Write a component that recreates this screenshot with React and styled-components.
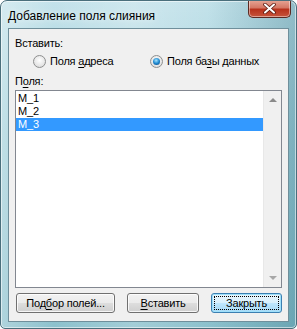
import React, { useState } from 'react'
import styled, { createGlobalStyle } from 'styled-components'

const GlobalStyle = createGlobalStyle`
  html, body {
    margin: 0;
    padding: 0;
    background: #ffffff;
  }
  body {
    font-family: "Liberation Sans", Arial, sans-serif;
    font-size: 11px;
    color: #000;
  }
`

const Window = styled.div`
  width: 297px;
  height: 329px;
  box-sizing: border-box;
  border: 1px solid #4a6f7c;
  border-radius: 7px 7px 5px 5px;
  background:
    linear-gradient(90deg, rgba(255,255,255,0.3) 0%, rgba(255,255,255,0) 18%, rgba(255,255,255,0.2) 45%, rgba(255,255,255,0) 70%, rgba(30,100,120,0.3) 100%),
    linear-gradient(180deg, #c3e2ea 0%, #a6d2dc 40%, #8cc1cd 100%);
  box-shadow: inset 0 0 0 1px rgba(255,255,255,0.55);
  display: flex;
  flex-direction: column;
  padding: 0 7px 6px 7px;
  overflow: hidden;
`

const TitleBar = styled.div`
  height: 27px;
  display: flex;
  align-items: flex-start;
  justify-content: space-between;
`

const Title = styled.span`
  margin-top: 8px;
  font-size: 12px;
  color: #000;
  text-shadow: 0 0 6px rgba(255,255,255,0.9);
`

const CloseButton = styled.div`
  width: 43px;
  height: 18px;
  margin-right: -2px;
  margin-top: -1px;
  box-sizing: border-box;
  border: 1px solid #5b2a23;
  border-top: none;
  border-radius: 0 0 5px 5px;
  background: linear-gradient(180deg, #e8a797 0%, #d57865 45%, #b8321c 55%, #c6553c 100%);
  box-shadow: inset 0 0 0 1px rgba(255,255,255,0.45);
  display: flex;
  align-items: center;
  justify-content: center;
`

const Client = styled.div`
  flex: 1;
  border: 1px solid #6f8f9b;
  background: #f0f0f0;
  display: flex;
  flex-direction: column;
  padding: 7px 6px 0 6px;
  letter-spacing: -0.2px;
`

const GroupLabel = styled.div`
  height: 14px;
  line-height: 14px;
`

const RadioRow = styled.div`
  display: flex;
  align-items: center;
  height: 16px;
  margin-top: 3px;
  padding-left: 18px;
`

const RadioOption = styled.label`
  display: flex;
  align-items: center;
  gap: 4px;
  width: ${p => p.$width}px;
  cursor: default;
`

const RadioCircle = styled.span`
  width: 13px;
  height: 13px;
  box-sizing: border-box;
  border-radius: 50%;
  border: 1px solid #8e8f8f;
  background: radial-gradient(circle at 50% 40%, #ffffff 0%, #e2e2e2 70%, #cfcfcf 100%);
  display: flex;
  align-items: center;
  justify-content: center;
  &::after {
    content: '';
    display: ${p => (p.$checked ? 'block' : 'none')};
    width: 7px;
    height: 7px;
    border-radius: 50%;
    background: radial-gradient(circle at 45% 35%, #a6e4ff 0%, #1f8ad1 50%, #0f3f75 100%);
  }
`

const FieldsLabel = styled.div`
  height: 14px;
  line-height: 14px;
  margin-top: 5px;
`

const Key = styled.span`
  text-decoration: underline;
  text-underline-offset: 2px;
`

const ListBox = styled.div`
  margin-top: 2px;
  height: 198px;
  box-sizing: border-box;
  border: 1px solid #828790;
  background: #fff;
  display: flex;
`

const Items = styled.div`
  flex: 1;
  padding-top: 1px;
`

const Item = styled.div`
  height: 13px;
  line-height: 13px;
  padding-left: 2px;
  background: ${p => (p.$selected ? '#3399ff' : 'transparent')};
  color: ${p => (p.$selected ? '#fff' : '#000')};
`

const ScrollBar = styled.div`
  width: 17px;
  background: #f0f0f0;
  border-left: 1px solid #e8e8e8;
  display: flex;
  flex-direction: column;
  justify-content: space-between;
  align-items: center;
  padding: 7px 0 7px;
`

const Arrow = styled.span`
  width: 0;
  height: 0;
  border-left: 4px solid transparent;
  border-right: 4px solid transparent;
  ${p => (p.$down ? 'border-top: 4px solid #a7a7a7;' : 'border-bottom: 4px solid #8a8a8a;')}
`

const ButtonRow = styled.div`
  display: flex;
  align-items: center;
  margin-top: 5px;
  padding-left: 1px;
  gap: 12px;
`

const Button = styled.button`
  width: ${p => p.$width}px;
  height: 20px;
  box-sizing: border-box;
  padding: 0;
  font-family: "Liberation Sans", Arial, sans-serif;
  font-size: 11px;
  letter-spacing: -0.2px;
  color: #000;
  border-radius: 3px;
  border: 1px solid ${p => (p.$default ? '#3c7fb1' : '#707070')};
  background: ${p =>
    p.$default
      ? 'linear-gradient(180deg, #eaf6fd 0%, #d9f0fc 48%, #bee6fd 52%, #a7d9f5 100%)'
      : 'linear-gradient(180deg, #f2f2f2 0%, #ebebeb 48%, #dddddd 52%, #cfcfcf 100%)'};
  box-shadow: inset 0 0 0 1px ${p => (p.$default ? '#9fe0fb' : 'rgba(255,255,255,0.8)')};
  position: relative;
  &::after {
    content: '';
    display: ${p => (p.$default ? 'block' : 'none')};
    position: absolute;
    inset: 2px;
    border: 1px dotted #000;
  }
`

const fields = ['M_1', 'M_2', 'M_3']

export default function App() {
  const [mode, setMode] = useState('db')
  const [selected, setSelected] = useState(2)

  return (
    <>
      <GlobalStyle />
      <Window>
        <TitleBar>
          <Title>Добавление поля слияния</Title>
          <CloseButton>
            <svg width="13" height="11" viewBox="0 0 13 11">
              <path d="M2 1.5 L11 9.5 M11 1.5 L2 9.5" stroke="#5a1a10" strokeWidth="3.6" strokeLinecap="round" />
              <path d="M2 1.5 L11 9.5 M11 1.5 L2 9.5" stroke="#ffffff" strokeWidth="2" strokeLinecap="round" />
            </svg>
          </CloseButton>
        </TitleBar>
        <Client>
          <GroupLabel>Вставить:</GroupLabel>
          <RadioRow>
            <RadioOption $width={117} onClick={() => setMode('addr')}>
              <RadioCircle $checked={mode === 'addr'} />
              <span>Поля <Key>а</Key>дреса</span>
            </RadioOption>
            <RadioOption $width={130} onClick={() => setMode('db')}>
              <RadioCircle $checked={mode === 'db'} />
              <span>Поля ба<Key>з</Key>ы данных</span>
            </RadioOption>
          </RadioRow>
          <FieldsLabel>П<Key>о</Key>ля:</FieldsLabel>
          <ListBox>
            <Items>
              {fields.map((f, i) => (
                <Item key={f} $selected={i === selected} onClick={() => setSelected(i)}>
                  {f}
                </Item>
              ))}
            </Items>
            <ScrollBar>
              <Arrow />
              <Arrow $down />
            </ScrollBar>
          </ListBox>
          <ButtonRow>
            <Button $width={99}>Под<Key>б</Key>ор полей...</Button>
            <Button $width={72}><Key>В</Key>ставить</Button>
            <Button $width={71} $default>Закрыть</Button>
          </ButtonRow>
        </Client>
      </Window>
    </>
  )
}
